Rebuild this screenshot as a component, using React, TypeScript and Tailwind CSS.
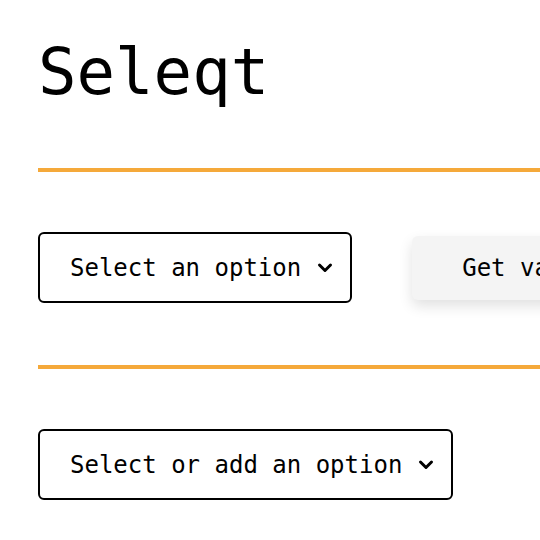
import React from "react";

const Chevron = () => (
  <svg width="16" height="16" viewBox="0 0 16 16" fill="none" className="shrink-0">
    <path d="M2.5 5 L8 10.5 L13.5 5" stroke="#000" strokeWidth="3" strokeLinecap="round" strokeLinejoin="round" />
  </svg>
);

const SelectBox = ({ label }: { label: string }) => (
  <button className="flex items-center gap-[16px] h-[71px] pl-[30px] pr-[17px] border-2 border-black rounded-[6px] bg-white text-[24px] text-black whitespace-nowrap">
    <span>{label}</span>
    <Chevron />
  </button>
);

const Divider = () => <div className="h-[4px] bg-[#f5a93a] w-full" />;

export default function App() {
  return (
    <div className="w-[540px] h-[540px] overflow-hidden bg-white" style={{ fontFamily: '"DejaVu Sans Mono", "Liberation Mono", monospace' }}>
      <div className="pl-[38px] pt-[32px]">
        <h1 className="text-[64px] leading-[80px] text-black">Seleqt</h1>
        <div className="mt-[56px]">
          <Divider />
        </div>
        <div className="flex items-center gap-[60px] mt-[60px]">
          <SelectBox label="Select an option" />
          <button className="h-[64px] pl-[50px] pr-[50px] rounded-[6px] bg-[#f4f4f4] text-[24px] text-black whitespace-nowrap shadow-[0_6px_14px_rgba(0,0,0,0.12)]">
            Get value
          </button>
        </div>
        <div className="mt-[62px]">
          <Divider />
        </div>
        <div className="flex mt-[60px]">
          <SelectBox label="Select or add an option" />
        </div>
      </div>
    </div>
  );
}
